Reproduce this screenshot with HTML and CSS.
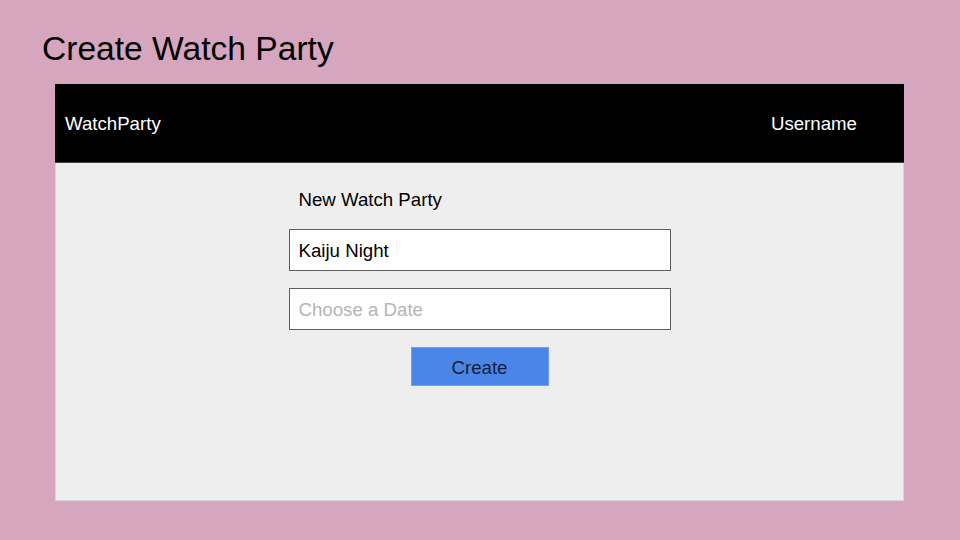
FILE: index.html
```html
<!DOCTYPE html>
<html>
<head>
<meta charset="utf-8">
<title>Create Watch Party</title>
<link rel="stylesheet" href="styles.css">
</head>
<body>
  <h1 class="page-title">Create Watch Party</h1>
  <div class="frame">
    <header class="topbar">
      <span class="brand">WatchParty</span>
      <span class="user">Username</span>
    </header>
    <main class="content">
      <form class="party-form">
        <div class="form-label">New Watch Party</div>
        <input class="field" type="text" value="Kaiju Night">
        <input class="field" type="text" placeholder="Choose a Date">
        <button class="create-btn" type="button">Create</button>
      </form>
    </main>
  </div>
</body>
</html>
```
FILE: styles.css
```css
html, body {
  margin: 0;
  padding: 0;
}
body {
  width: 960px;
  height: 540px;
  background: #d5a6bd;
  font-family: "Liberation Sans", Arial, sans-serif;
  color: #000;
  overflow: hidden;
}
.page-title {
  margin: 32px 0 0 42px;
  font-size: 33.6px;
  line-height: 33px;
  font-weight: normal;
  height: 33px;
}
.frame {
  margin: 19px 0 0 55px;
  width: 849px;
  height: 417px;
  display: flex;
  flex-direction: column;
}
.topbar {
  box-sizing: border-box;
  height: 79px;
  background: #000;
  color: #fff;
  display: flex;
  align-items: center;
  justify-content: space-between;
  padding: 2px 47px 0 10px;
  font-size: 18.67px;
  border-bottom: 1px solid #444;
}
.content {
  flex: 1;
  background: #eeeeee;
  border: 1px solid #d6d6d6;
  border-top: none;
  display: flex;
  justify-content: center;
  padding-top: 25px;
}
.party-form {
  width: 382px;
  display: flex;
  flex-direction: column;
  align-items: stretch;
}
.form-label {
  font-size: 18.67px;
  line-height: 22px;
  padding: 1px 0 0 10px;
  margin-bottom: 18px;
}
.field {
  box-sizing: border-box;
  height: 42px;
  margin: 0 0 17px 0;
  border: 1px solid #5f5f5f;
  background: #fff;
  padding: 2px 9px 0;
  font-family: "Liberation Sans", Arial, sans-serif;
  font-size: 18.67px;
  color: #000;
  outline: none;
}
.field::placeholder {
  color: #b5b5b5;
  opacity: 1;
}
.create-btn {
  align-self: center;
  box-sizing: border-box;
  width: 138px;
  height: 39px;
  background: #4a86e8;
  border: 1px solid #6e9fee;
  color: #13203c;
  font-family: "Liberation Sans", Arial, sans-serif;
  font-size: 18.67px;
  padding: 2px 0 0;
  cursor: pointer;
}
```
